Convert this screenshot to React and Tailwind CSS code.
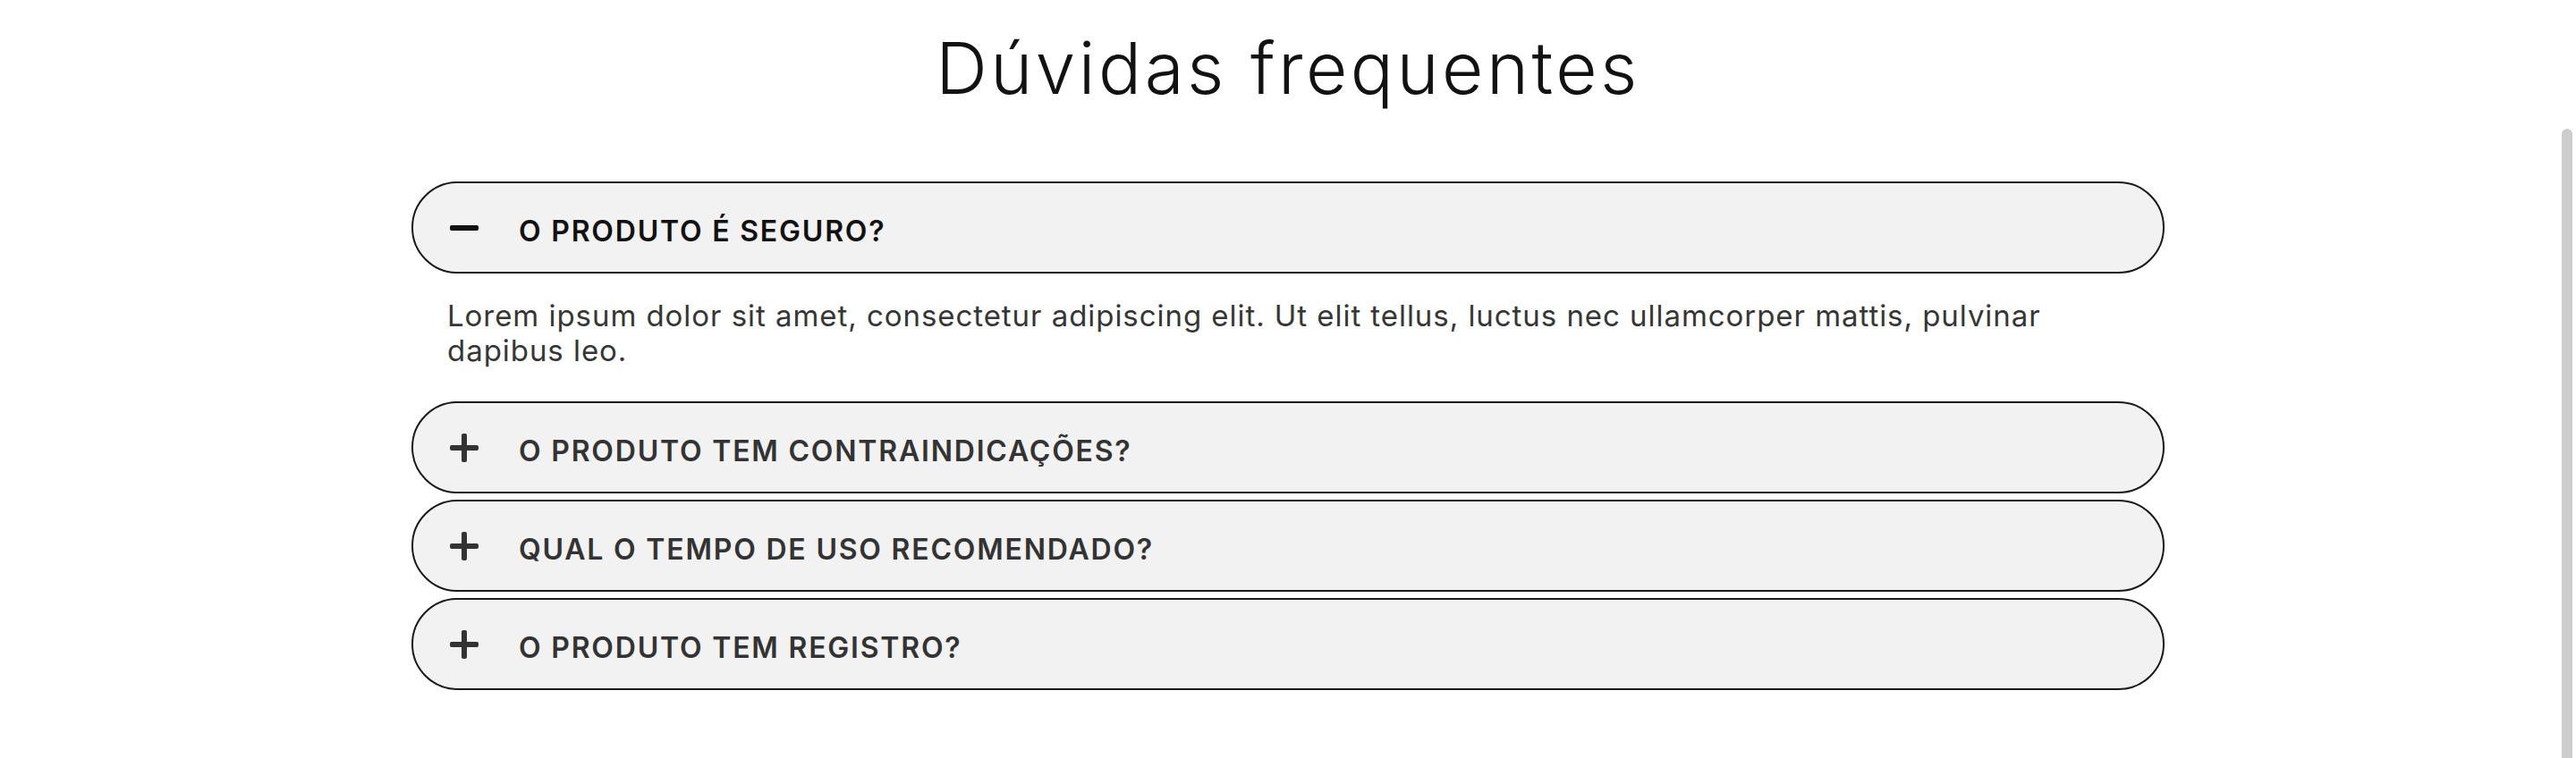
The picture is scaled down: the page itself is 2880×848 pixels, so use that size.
import React, { useState } from "react";

const faqs = [
  {
    q: "O produto é seguro?",
    a: "Lorem ipsum dolor sit amet, consectetur adipiscing elit. Ut elit tellus, luctus nec ullamcorper mattis, pulvinar dapibus leo.",
  },
  {
    q: "O produto tem contraindicações?",
    a: "Lorem ipsum dolor sit amet, consectetur adipiscing elit. Ut elit tellus, luctus nec ullamcorper mattis, pulvinar dapibus leo.",
  },
  {
    q: "Qual o tempo de uso recomendado?",
    a: "Lorem ipsum dolor sit amet, consectetur adipiscing elit. Ut elit tellus, luctus nec ullamcorper mattis, pulvinar dapibus leo.",
  },
  {
    q: "O produto tem registro?",
    a: "Lorem ipsum dolor sit amet, consectetur adipiscing elit. Ut elit tellus, luctus nec ullamcorper mattis, pulvinar dapibus leo.",
  },
];

const ToggleIcon = ({ open }) => (
  <svg width="32" height="32" viewBox="0 0 32 32" className="flex-shrink-0">
    <rect x="0" y="13" width="32" height="6" rx="2" fill="currentColor" />
    {!open && <rect x="13" y="0" width="6" height="32" rx="2" fill="currentColor" />}
  </svg>
);

export default function App() {
  const [openIdx, setOpenIdx] = useState(0);

  return (
    <div className="relative min-h-screen bg-white font-['Inter','Noto_Sans',sans-serif]">
      <h2 className="text-center text-[80px] font-light leading-none tracking-[3.5px] text-[#121212] pt-[36px]">
        Dúvidas frequentes
      </h2>

      <div className="w-[1960px] mx-auto mt-[87px] flex flex-col gap-[7px]">
        {faqs.map((item, i) => {
          const open = openIdx === i;
          return (
            <div key={item.q}>
              <button
                onClick={() => setOpenIdx(open ? -1 : i)}
                className="w-full h-[103px] flex items-center gap-[45px] pl-[41px] pr-10 bg-[#f2f2f2] border-2 border-[#1a1a1a] rounded-[52px] text-left"
              >
                <span className={open ? "text-[#111]" : "text-[#333]"}>
                  <ToggleIcon open={open} />
                </span>
                <span
                  className={`pt-[8px] text-[32px] font-semibold uppercase tracking-[1.8px] ${
                    open ? "text-[#111]" : "text-[#333]"
                  }`}
                >
                  {item.q}
                </span>
              </button>
              {open && (
                <p className="pl-10 pr-[100px] pt-[28px] pb-[30px] text-[33px] leading-[39px] tracking-[0.95px] text-[#363636]">
                  {item.a}
                </p>
              )}
            </div>
          );
        })}
      </div>

      {/* scrollbar thumb */}
      <div className="absolute right-[4px] top-[144px] bottom-0 w-[12px] rounded-t-full bg-[#cdcdcd]" />
    </div>
  );
}
